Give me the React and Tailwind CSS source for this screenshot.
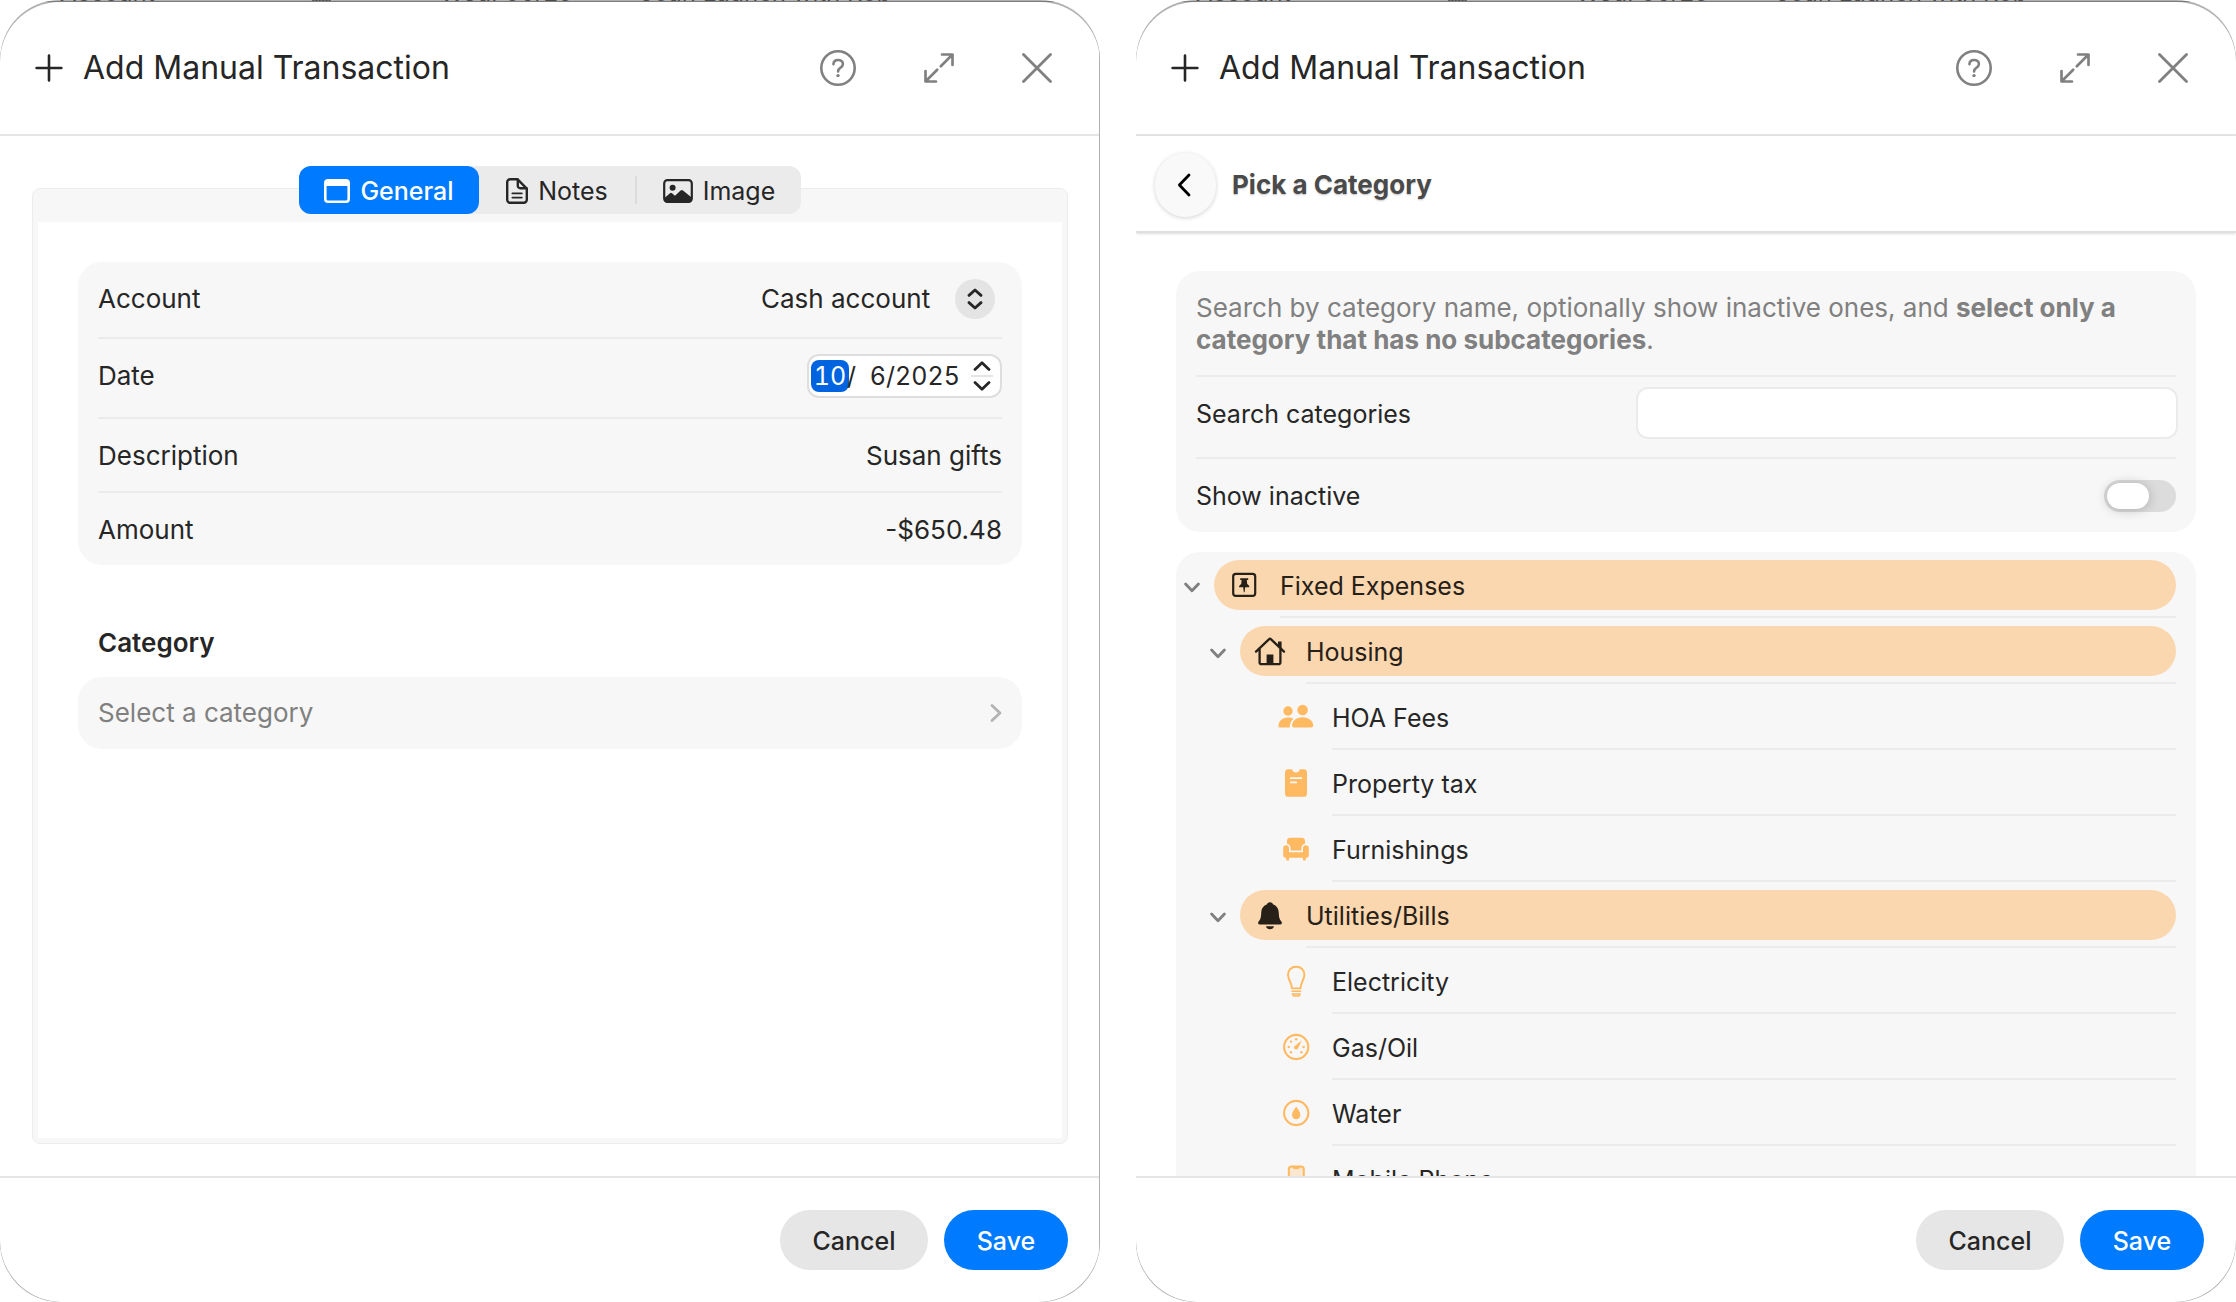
import { useState } from 'react';
import clsx from 'clsx';

function PlusIcon() {
  return (
    <svg className="size-7 shrink-0" viewBox="0 0 28 28" fill="none" stroke="#262626" strokeWidth="2.6" strokeLinecap="round">
      <path d="M14 1.6v24.8M1.6 14h24.8" />
    </svg>
  );
}

function HelpIcon() {
  return (
    <svg className="size-9" viewBox="0 0 36 36" fill="none" stroke="#808080" strokeLinecap="round" strokeLinejoin="round">
      <circle cx="18" cy="18" r="16.7" strokeWidth="2.6" />
      <path d="M13.4 14.2c.2-2.600 2-4.200 4.700-4.200s4.800 1.600 4.800 4c0 1.900-1 2.900-2.600 3.900-1.600 1-2.200 1.800-2.200 3.500" strokeWidth="2.600" />
      <circle cx="18" cy="25.600" r="1.700" fill="#808080" stroke="none" />
    </svg>
  );
}

function ExpandIcon() {
  return (
    <svg className="size-[30px]" viewBox="0 0 30 30" fill="none" stroke="#808080" strokeWidth="2.7" strokeLinecap="round" strokeLinejoin="round">
      <path d="M18 1.500h10.500V12M28 2 16.800 13.200M12 28.500H1.500V18M2 28l11.200-11.200" />
    </svg>
  );
}

function CloseIcon() {
  return (
    <svg className="size-[30px]" viewBox="0 0 30 30" fill="none" stroke="#808080" strokeWidth="2.8" strokeLinecap="round">
      <path d="M1.500 1.500l27 27M28.500 1.500l-27 27" />
    </svg>
  );
}

function WindowIcon() {
  return (
    <svg className="w-[26px] h-6" viewBox="0 0 26 24">
      <rect x="1.300" y="1.300" width="23.400" height="21.400" rx="2.800" fill="none" stroke="currentColor" strokeWidth="2.600" />
      <path d="M1 3.500Q1 1 3.500 1h19Q25 1 25 3.500V7H1z" fill="currentColor" />
    </svg>
  );
}

function NotesIcon() {
  return (
    <svg className="w-[22px] h-[26px]" viewBox="0 0 22 26" fill="none" stroke="currentColor" strokeWidth="2.400" strokeLinecap="round" strokeLinejoin="round">
      <path d="M4.200 1.200h7.200l9.400 9.400v11.200a3 3 0 0 1-3 3H4.200a3 3 0 0 1-3-3V4.200a3 3 0 0 1 3-3z" />
      <path d="M11.800 1.600v6.200a2.400 2.400 0 0 0 2.400 2.400h6.200" />
      <path d="M6.400 15.400h9.400M6.400 19.600h9.400" strokeWidth="1.800" />
    </svg>
  );
}

function ImageIcon() {
  return (
    <svg className="w-[30px] h-6" viewBox="0 0 30 24">
      <rect x="1.200" y="1.200" width="27.600" height="21.600" rx="3.200" fill="none" stroke="currentColor" strokeWidth="2.200" />
      <circle cx="9.600" cy="8.800" r="3" fill="currentColor" />
      <path d="M2 18.500l5-4.300q1-.8 2 0l3 2.500 5.600-5.200q1.200-1 2.400 0L28 18v3q0 1.600-2 1.600H4Q2 22.600 2 21z" fill="currentColor" />
    </svg>
  );
}

function Chevron({ d, box, className }) {
  return (
    <svg className={clsx('shrink-0', className)} viewBox={box} fill="none" stroke="currentColor" strokeWidth="2.8" strokeLinecap="round" strokeLinejoin="round">
      <path d={d} />
    </svg>
  );
}

const icons = {
  pin: (
    <>
      <rect x="9.200" y="8.800" width="22" height="22" rx="2.600" fill="none" stroke="currentColor" strokeWidth="2.200" />
      <path d="M16.200 13.200h8v1.900h-1.400l.4 4c1.400.8 2.200 1.800 2.200 3.200h-4.200l-.6 5h-.8l-.6-5H15c0-1.400.8-2.400 2.200-3.200l.4-4h-1.400z" fill="currentColor" />
    </>
  ),
  house: (
    <>
      <path d="M6 20.600 18.900 8.300q1.100-1 2.200 0L34 20.600M9.600 18v13.200q0 2 2 2h16.800q2 0 2-2V18" fill="none" stroke="currentColor" strokeWidth="2.300" strokeLinecap="round" strokeLinejoin="round" />
      <path d="M28 10.500h3.600v7L28 14zM16.600 33v-9.600h6.800V33z" fill="currentColor" />
    </>
  ),
  people: (
    <>
      <circle cx="12" cy="14" r="4.700" fill="currentColor" />
      <circle cx="26.600" cy="13" r="5.300" fill="currentColor" />
      <path d="M2.400 29c0-4.600 3.800-8.600 9.600-8.600 2.200 0 4 .5 5.400 1.400-2.400 2.200-3.600 5-3.600 8.800H4q-1.600 0-1.600-1.600z" fill="currentColor" />
      <path d="M16 28.600c0-4.500 4.200-8.400 10.600-8.400s10.600 3.900 10.600 8.400q0 2-2 2H18q-2 0-2-2z" fill="currentColor" />
    </>
  ),
  clipboard: (
    <>
      <path d="M12.400 6.200h3.400c.6 0 .7 3.200 4.200 3.200s3.600-3.200 4.200-3.200h3.400q3.400 0 3.400 3.400v20.800q0 3.400-3.400 3.400H12.400Q9 33.800 9 30.400V9.600q0-3.400 3.400-3.400z" fill="currentColor" />
      <path d="M14.800 15.200h10.600M14.800 19.400h5.400" stroke="#f7f7f7" strokeWidth="1.700" strokeLinecap="round" />
    </>
  ),
  sofa: (
    <path d="M14.400 8.800h11.200q3.400 0 3.400 3.400v2.600c-2.200.5-3.600 2-3.600 4.200v2.500H14.600V19c0-2.200-1.400-3.700-3.600-4.200v-2.600q0-3.400 3.400-3.400zM7.200 19.200c0-3.800 5.800-3.800 5.800 0v4h14v-4c0-3.800 5.800-3.800 5.800 0v7.200q0 2.400-2.400 2.400H30l-.4 2.600h-2.400l-.4-2.600H13.200l-.4 2.600h-2.400l-.4-2.600h-.4q-2.400 0-2.400-2.400z" fill="currentColor" />
  ),
  bell: (
    <>
      <path d="M20 7.200c1.800 0 2.800 1 3.200 2.300 3.700 1.200 5.500 4.400 5.600 8.700.1 4.400.8 6.300 2.600 8.200 1 1.100.5 3-1.200 3H9.800c-1.700 0-2.200-1.900-1.200-3 1.800-1.900 2.500-3.800 2.600-8.200.1-4.300 1.900-7.500 5.600-8.700.4-1.300 1.400-2.300 3.200-2.300z" fill="currentColor" />
      <path d="M16 31.200h8c-.4 1.900-2 3-4 3s-3.600-1.100-4-3z" fill="currentColor" />
    </>
  ),
  bulb: (
    <>
      <path d="M16 27.400c-.6-6.600-4-8.800-4-13.600 0-4.800 3.400-8 8.200-8s8.200 3.200 8.200 8c0 4.800-3.400 7-4 13.600z" fill="none" stroke="currentColor" strokeWidth="1.900" strokeLinejoin="round" />
      <path d="M16 30.200h8.600M16.400 33h7.800l-1.400 2h-5z" fill="none" stroke="currentColor" strokeWidth="1.600" strokeLinecap="round" strokeLinejoin="round" />
    </>
  ),
  gauge: (
    <>
      <circle cx="20.200" cy="20" r="12.100" fill="none" stroke="currentColor" strokeWidth="2.100" />
      <path d="M25.900 13.300 21.900 21.500c-1.400 2.400-4.700.4-3.700-2z" fill="currentColor" />
      <g fill="currentColor">
        <circle cx="20.200" cy="12.200" r="1.200" />
        <circle cx="15" cy="14.600" r="1.200" />
        <circle cx="12.800" cy="20" r="1.200" />
        <circle cx="15" cy="25.300" r="1.200" />
        <circle cx="25.400" cy="25.300" r="1.200" />
        <circle cx="27.600" cy="20" r="1.200" />
      </g>
    </>
  ),
  drop: (
    <>
      <circle cx="20.200" cy="20" r="12.100" fill="none" stroke="currentColor" strokeWidth="2.100" />
      <path d="M20.200 13.600c1.600 2.700 4.200 5.300 4.200 8.400 0 2.400-1.800 4.200-4.200 4.200S16 24.400 16 22c0-3.100 2.600-5.700 4.200-8.400z" fill="currentColor" />
    </>
  ),
  phone: (
    <>
      <rect x="12.800" y="7.600" width="15" height="26" rx="2.800" fill="#fbe6cf" stroke="currentColor" strokeWidth="2" />
      <path d="M17 7.600h6.600v1.200q0 1.200-1.200 1.200h-4.200Q17 10 17 8.800z" fill="currentColor" />
    </>
  ),
};

const categories = [
  { name: 'Fixed Expenses', icon: 'pin', level: 0 },
  { name: 'Housing', icon: 'house', level: 1 },
  { name: 'HOA Fees', icon: 'people', level: 2 },
  { name: 'Property tax', icon: 'clipboard', level: 2 },
  { name: 'Furnishings', icon: 'sofa', level: 2 },
  { name: 'Utilities/Bills', icon: 'bell', level: 1 },
  { name: 'Electricity', icon: 'bulb', level: 2 },
  { name: 'Gas/Oil', icon: 'gauge', level: 2 },
  { name: 'Water', icon: 'drop', level: 2 },
  { name: 'Mobile Phone', icon: 'phone', level: 2 },
];

const indents = ['pl-2', 'pl-[34px]', 'pl-[60px]'];

function CategoryRow({ name, icon, level }) {
  const isGroup = level < 2;

  return (
    <li className={clsx('flex pr-5', indents[level])}>
      <div className="w-[30px] shrink-0 pt-[30px]">
        {isGroup && (
          <button type="button" aria-label={`Collapse ${name}`} className="block text-[#808080]">
            <Chevron className="w-4 h-[11px]" box="0 0 16 11" d="M1.600 2 8 8.800 14.400 2" />
          </button>
        )}
      </div>
      <div className="flex-1">
        <button
          type="button"
          className={clsx(
            'mt-2 mb-[6px] flex h-[50px] w-full items-center rounded-full text-left',
            isGroup ? 'bg-[#fbd7af] text-[#262019]' : 'text-[#262626]'
          )}
        >
          <span className={clsx('flex w-[66px] shrink-0 pl-[10px]', !isGroup && 'text-[#ffb961]')}>
            <svg className="size-10" viewBox="0 0 40 40">{icons[icon]}</svg>
          </span>
          <span className="pt-[2px]">{name}</span>
        </button>
        <div className="ml-[66px] h-[2px] bg-[#ebebeb]" />
      </div>
    </li>
  );
}

// Sheet with the bottom edge of the underlying transaction list peeking out above it
function Sheet({ edge, children }) {
  return (
    <section
      className={clsx(
        'relative flex h-screen min-w-0 flex-col overflow-hidden rounded-[60px] bg-[#b0b0b0]',
        edge && 'after:absolute after:inset-y-12 after:right-0 after:w-px after:bg-[#b0b0b0]'
      )}
    >
      <div aria-hidden="true" className="flex h-[2px] shrink-0 items-end overflow-hidden border-b border-[#7d7d7d] text-2xl leading-4 whitespace-nowrap text-[#4a4a4a]">
        <span className="w-[310px] shrink-0 pl-[60px]">Account</span>
        <span className="w-[130px] shrink-0">▦</span>
        <span className="w-[200px] shrink-0">Wed, 06/25</span>
        <span>Joan Launch with Rob</span>
      </div>
      <div className="flex min-h-0 flex-1 flex-col overflow-hidden rounded-t-[60px] rounded-b-[62px] bg-white">
        <header className="flex h-[134px] shrink-0 items-center border-b-2 border-[#e5e5e5] pr-12 pl-[35px]">
          <PlusIcon />
          <h1 className="ml-5 flex-1 text-[32px]">Add Manual Transaction</h1>
          <button type="button" aria-label="Help"><HelpIcon /></button>
          <button type="button" aria-label="Expand" className="ml-[68px]"><ExpandIcon /></button>
          <button type="button" aria-label="Close" className="ml-[68px]"><CloseIcon /></button>
        </header>
        {children}
        <footer className="flex shrink-0 justify-end gap-4 border-t-2 border-[#e5e5e5] p-8">
          <button type="button" className="h-[60px] w-[148px] rounded-full bg-[#e6e6e6] pt-[2px] font-medium">Cancel</button>
          <button type="button" className="h-[60px] w-[124px] rounded-full bg-[#007aff] pt-[2px] font-medium text-white">Save</button>
        </footer>
      </div>
    </section>
  );
}

const tabs = [
  { id: 'general', label: 'General', Icon: WindowIcon, width: 'w-[180px]' },
  { id: 'notes', label: 'Notes', Icon: NotesIcon, width: 'w-[156px]' },
  { id: 'image', label: 'Image', Icon: ImageIcon, width: 'w-[164px]' },
];

function GeneralSheet() {
  const [tab, setTab] = useState('general');
  const [month, setMonth] = useState('10');
  const [day, setDay] = useState('6');
  const [year, setYear] = useState('2025');
  const [description, setDescription] = useState('Susan gifts');
  const [amount, setAmount] = useState('-$650.48');

  return (
    <Sheet edge>
      <div className="flex min-h-0 flex-1 flex-col px-8 pt-[30px] pb-8">
        <div role="tablist" className="relative z-10 mx-auto -mb-[26px] flex h-12 rounded-xl bg-[#ebebeb]">
          {tabs.map(({ id, label, Icon, width }, i) => (
            <div key={id} className="flex items-center">
              {i === 2 && <span className="h-7 w-[2px] bg-[#dcdcdc]" />}
              <button
                type="button"
                role="tab"
                aria-selected={tab === id}
                onClick={() => setTab(id)}
                className={clsx(
                  'flex h-12 items-center justify-center gap-[10px] rounded-xl pt-px',
                  width,
                  tab === id ? 'bg-[#007aff] font-medium text-white' : 'text-[#262626]'
                )}
              >
                <Icon />
                {label}
              </button>
            </div>
          ))}
        </div>

        <div className="flex-1 rounded-lg border border-[#ececec] bg-[#f7f7f7] px-[5px] pt-[33px] pb-[5px]">
          <div className="h-full bg-white px-10 pt-10 text-[26px]">
            <form className="rounded-3xl bg-[#f7f7f7] px-5">
              <div className="flex h-[77px] items-center justify-between border-b-2 border-[#ebebeb] pb-[2px]">
                <label htmlFor="account">Account</label>
                <div className="flex items-center pr-[7px]">
                  <select id="account" className="-mr-10 appearance-none bg-transparent pr-16 outline-none">
                    <option>Cash account</option>
                  </select>
                  <span className="pointer-events-none flex size-10 flex-col items-center justify-center gap-1 rounded-full bg-[#e4e4e4]">
                    <Chevron className="h-[9px] w-4" box="0 0 16 9" d="M2 7.400 8 2l6 5.400" />
                    <Chevron className="h-[9px] w-4" box="0 0 16 9" d="M2 1.600 8 7l6-5.400" />
                  </span>
                </div>
              </div>

              <div className="flex h-20 items-center justify-between border-b-2 border-[#ebebeb] pb-1">
                <label htmlFor="month">Date</label>
                <div className="flex h-11 items-center rounded-xl border-2 border-[#dedede] bg-white pr-[7px] pl-[2px] text-[25px] tabular-nums">
                  <input id="month" value={month} onChange={(e) => setMonth(e.target.value)} className="h-8 w-[38px] rounded-lg bg-[#0064e1] text-center text-white outline-none" />
                  <span className="-ml-[2px]">/</span>
                  <input aria-label="Day" value={day} onChange={(e) => setDay(e.target.value)} className="w-[30px] text-right outline-none" />
                  <span>/</span>
                  <input aria-label="Year" value={year} onChange={(e) => setYear(e.target.value)} className="w-[66px] outline-none" />
                  <div className="ml-[10px] flex w-[22px] flex-col items-center">
                    <button type="button" aria-label="Increase"><Chevron className="mb-1 h-[10px] w-[18px]" box="0 0 18 10" d="M2 8.400 9 1.800l7 6.600" /></button>
                    <span className="h-[2px] w-full bg-[#e4e4e4]" />
                    <button type="button" aria-label="Decrease"><Chevron className="mt-1 h-[10px] w-[18px]" box="0 0 18 10" d="M2 1.600 9 8.200l7-6.600" /></button>
                  </div>
                </div>
              </div>

              <div className="flex h-[74px] items-center justify-between border-b-2 border-[#ebebeb] pt-[2px]">
                <label htmlFor="description">Description</label>
                <input id="description" value={description} onChange={(e) => setDescription(e.target.value)} className="bg-transparent text-right outline-none" />
              </div>

              <div className="flex h-[72px] items-center justify-between pt-[2px]">
                <label htmlFor="amount">Amount</label>
                <input id="amount" value={amount} onChange={(e) => setAmount(e.target.value)} className="bg-transparent text-right outline-none" />
              </div>
            </form>

            <h2 className="mt-[62px] mb-[18px] pl-5 font-semibold">Category</h2>
            <button type="button" className="flex h-[72px] w-full items-center justify-between rounded-3xl bg-[#f7f7f7] px-5 text-[#808080]">
              Select a category
              <Chevron className="h-5 w-3 text-[#b3b3b3]" box="0 0 12 20" d="M2 2.400 10 10l-8 7.600" />
            </button>
          </div>
        </div>
      </div>
    </Sheet>
  );
}

function CategorySheet() {
  const [search, setSearch] = useState('');
  const [showInactive, setShowInactive] = useState(false);

  const visible = categories.filter((c) => c.name.toLowerCase().includes(search.toLowerCase()));

  return (
    <Sheet>
      <div className="flex h-[97px] shrink-0 items-center gap-4 border-b-2 border-[#e0e0e0] pt-[3px] pl-[19px] shadow-sm">
        <button type="button" aria-label="Back" className="flex h-16 w-[61px] items-center justify-center rounded-full bg-[#f9f9f9] pr-[3px] text-black shadow-[0_1px_4px_rgba(0,0,0,0.18)]">
          <Chevron className="h-6 w-[14px]" box="0 0 14 24" d="M12 2 2.400 12 12 22" />
        </button>
        <h2 className="text-[26px] font-bold text-[#4a4a4a] text-shadow-sm">Pick a Category</h2>
      </div>

      <div className="min-h-0 flex-1 overflow-hidden px-10 pt-[38px]">
        <div className="rounded-3xl bg-[#f7f7f7] px-5">
          <p className="h-[106px] border-b-2 border-[#ebebeb] pt-[21px] text-[26px] leading-8 text-[#808080]">
            Search by category name, optionally show inactive ones, and <b>select only a category that has no subcategories</b>.
          </p>
          <div className="flex h-[82px] items-start justify-between border-b-2 border-[#ebebeb] pt-[10px]">
            <label htmlFor="search" className="leading-[54px]">Search categories</label>
            <input
              id="search"
              type="text"
              value={search}
              onChange={(e) => setSearch(e.target.value)}
              className="-mr-[2px] h-[52px] w-[542px] rounded-xl border-2 border-[#ebebeb] bg-white px-3 outline-none"
            />
          </div>
          <div className="flex h-[73px] items-center justify-between">
            <label htmlFor="inactive">Show inactive</label>
            <input
              id="inactive"
              type="checkbox"
              role="switch"
              checked={showInactive}
              onChange={(e) => setShowInactive(e.target.checked)}
              className="h-8 w-[72px] appearance-none rounded-full bg-[#dcdcdc] p-[3px] before:block before:h-[26px] before:w-[42px] before:rounded-full before:bg-white before:shadow-[0_1px_12px_rgba(0,0,0,0.22)] checked:bg-[#007aff] checked:before:ml-6"
            />
          </div>
        </div>

        <ul className="mt-5 rounded-3xl bg-[#f7f7f7]">
          {visible.map((c) => (
            <CategoryRow key={c.name} {...c} />
          ))}
        </ul>
      </div>
    </Sheet>
  );
}

export default function App() {
  return (
    <main className="grid grid-cols-2 gap-9 bg-white font-['Inter','Liberation_Sans',sans-serif] text-[25px] leading-8 text-[#262626]">
      <GeneralSheet />
      <CategorySheet />
    </main>
  );
}
